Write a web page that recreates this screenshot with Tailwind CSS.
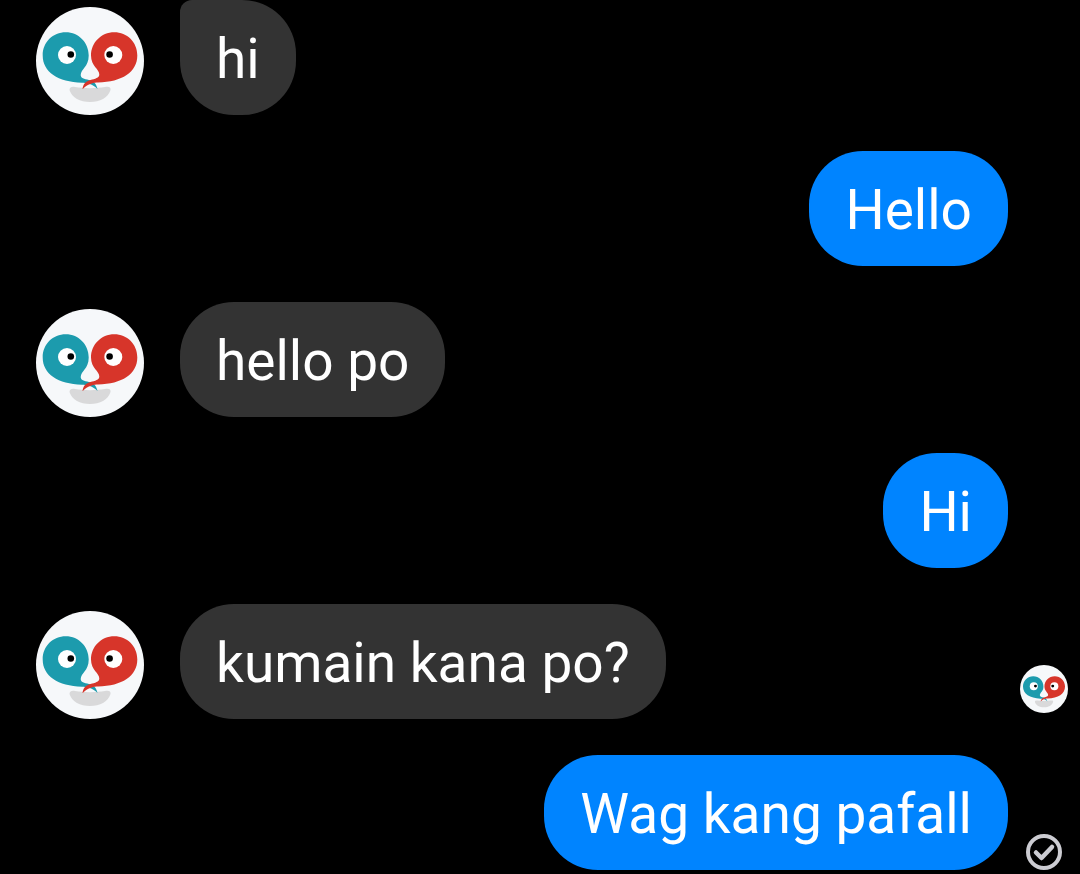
<!DOCTYPE html>
<html lang="tl">
<head>
<meta charset="utf-8">
<meta name="viewport" content="width=device-width, initial-scale=1">
<title>Chat</title>
<script src="https://cdn.jsdelivr.net/npm/@tailwindcss/browser@4"></script>
</head>
<body class="bg-black font-[Roboto,sans-serif] text-[55px] leading-[65px] text-white">
<svg class="hidden" aria-hidden="true">
  <symbol id="face" viewBox="0 0 108 108">
    <circle cx="54" cy="54" r="54" fill="#f6f8fa"/>
    <path d="M33.500 83C33.500 80 36 79.600 39 80C48 81.500 60 81.500 69 80C73 79.500 75 80 74.500 83C72 91 64 95 54 95C44 95 36 91 33.500 83Z" fill="#d9d9da"/>
    <path d="M6.700 48.500C6.700 35 17 25.300 29.700 25.300C43 25.300 52.700 36 52.700 48.500C52.700 60 44.700 62 44.700 68C44.700 71 48 72 53 73C58 74 60.500 77 61.500 82C59 79.500 57 78 53 76.700C50 75.800 48 75.800 46 75.700C22 75 6.700 65 6.700 48.500Z" fill="#1c9bad"/>
    <path d="M101.300 48.500C101.300 35 91 25.300 78.300 25.300C65 25.300 55 36 55 48.500C55 59 63.300 62 63.300 67.500C63.300 71 59 71.800 54.500 73C50 74.200 47 77 46.500 82.300C49 79.500 51 78 55 76.700C58 75.700 60 75.600 62 75.500C86 75 101.300 65 101.300 48.500Z" fill="#d7352a"/>
    <circle cx="31" cy="48" r="9" fill="#fff"/>
    <circle cx="77.300" cy="48" r="9" fill="#fff"/>
    <circle cx="34.800" cy="47.500" r="3.300"/>
    <circle cx="73.600" cy="47.500" r="3.300"/>
  </symbol>
</svg>
<main class="flex flex-col gap-9 pl-9">
  <div class="flex items-end gap-9">
    <svg class="size-27 shrink-0" role="img" aria-label="Avatar"><use href="#face"/></svg>
    <p class="rounded-[54px] rounded-tl-[12px] bg-[#333] px-9 pt-[27px] pb-[23px]">hi</p>
  </div>
  <div class="flex justify-end pr-18">
    <p class="rounded-[54px] bg-[#0084ff] px-9 pt-[27px] pb-[23px]">Hello</p>
  </div>
  <div class="flex items-end gap-9">
    <svg class="size-27 shrink-0" role="img" aria-label="Avatar"><use href="#face"/></svg>
    <p class="rounded-[54px] bg-[#333] px-9 pt-[27px] pb-[23px]">hello po</p>
  </div>
  <div class="flex justify-end pr-18">
    <p class="rounded-[54px] bg-[#0084ff] px-9 pt-[27px] pb-[23px]">Hi</p>
  </div>
  <div class="flex items-end gap-9">
    <svg class="size-27 shrink-0" role="img" aria-label="Avatar"><use href="#face"/></svg>
    <p class="rounded-[54px] bg-[#333] px-9 pt-[27px] pb-[23px]">kumain kana po?</p>
    <svg class="mr-3 mb-[6px] ml-auto size-12 shrink-0" role="img" aria-label="Seen"><use href="#face"/></svg>
  </div>
  <div class="flex items-end justify-end">
    <p class="rounded-[54px] bg-[#0084ff] px-9 pt-[27px] pb-[23px]">Wag kang pafall</p>
    <svg class="mx-[18px] size-9 shrink-0" viewBox="0 0 36 36" fill="none" stroke="#ccccd2" stroke-width="4" role="img" aria-label="Delivered">
      <circle cx="18" cy="18" r="16"/>
      <path d="M10 18.500L15.500 24L26 13" stroke-width="4.500" stroke-linecap="round" stroke-linejoin="round"/>
    </svg>
  </div>
</main>
</body>
</html>
